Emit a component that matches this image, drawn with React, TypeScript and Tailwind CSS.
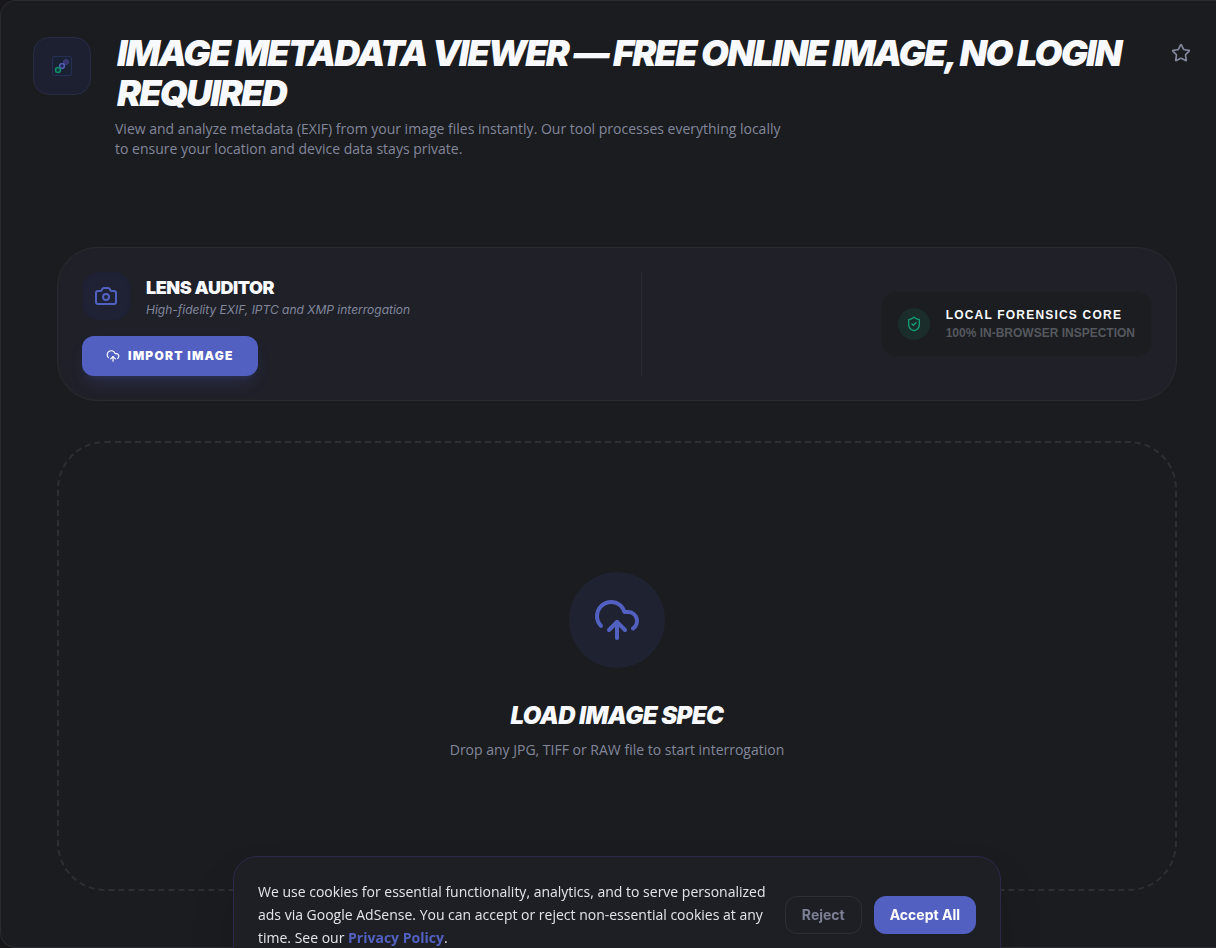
import { Camera, CloudUpload, ShieldCheck, Star } from 'lucide-react'

function ToolLogo() {
    return (
        <svg viewBox="0 0 20 20" className="h-5 w-5" fill="none">
            <rect x="0.5" y="0.5" width="19" height="19" rx="2" fill="#1a2133" stroke="#253056"/>
            <path d="M7 13l6-6" stroke="#3d4696" strokeWidth="2"/>
            <circle cx="14" cy="6" r="2.5" fill="#33326c" stroke="#403e83"/>
            <circle cx="10" cy="10" r="2.4" fill="#20264d" stroke="#5661bc" strokeWidth="1.4"/>
            <circle cx="6" cy="14" r="2.5" fill="#123c3c" stroke="#128c6c" strokeWidth="1.5"/>
        </svg>
    )
}

function Header() {
    return (
        <header className="flex items-start gap-6 pt-8 pr-[17px] pl-8">
            <div className="mt-1 flex h-[58px] w-[58px] shrink-0 items-center justify-center rounded-2xl border border-[#282b45] bg-[#1c2030]">
                <ToolLogo/>
            </div>
            <div className="min-w-0 flex-1">
                <h1 className="pl-0.5 text-4xl leading-10 font-black tracking-tighter text-[#f8f9fc] uppercase italic">
                    Image Metadata Viewer — Free Online Image, No Login Required
                </h1>
                <p className="mt-1.5 max-w-2xl font-['Open_Sans',sans-serif] text-sm leading-5 font-medium text-[#83879c]">
                    View and analyze metadata (EXIF) from your image files instantly. Our tool processes everything locally to ensure your location and device data stays private.
                </p>
            </div>
            <button type="button" aria-label="Add to favorites" className="mt-0.5 shrink-0 p-2 text-[#83879c]">
                <Star className="h-5 w-5"/>
            </button>
        </header>
    )
}

function AuditorCard() {
    return (
        <section className="grid grid-cols-2 gap-12 rounded-[40px] border border-[#2a2b32] bg-[#1f2028] p-6">
            {/* Tool name and import */}
            <div className="flex flex-col items-start gap-4">
                <div className="flex items-center gap-4">
                    <div className="flex h-12 w-12 items-center justify-center rounded-2xl bg-[#1f2235] text-[#5261c1] shadow-inner">
                        <Camera className="h-6 w-6"/>
                    </div>
                    <div className="pt-1">
                        <h2 className="text-lg leading-6 font-black tracking-tight text-[#f8f9fc] uppercase">Lens Auditor</h2>
                        <p className="text-xs leading-5 text-[#83879c] italic">High-fidelity EXIF, IPTC and XMP interrogation</p>
                    </div>
                </div>
                <button type="button" className="flex h-10 items-center gap-2 rounded-xl bg-[#5261c1] px-6 text-xs font-black tracking-widest text-white uppercase shadow-lg shadow-[#5261c1]/20">
                    <CloudUpload className="h-3.5 w-3.5"/>
                    Import Image
                </button>
            </div>

            {/* Privacy badge */}
            <div className="flex items-center justify-end border-l border-[#2b2c33]">
                <div className="flex items-center gap-4 rounded-2xl border border-[#1e2024] bg-[#1c1d20] p-4">
                    <div className="flex h-8 w-8 items-center justify-center rounded-full bg-[#1a2d2b] text-[#12a078]">
                        <ShieldCheck className="h-4 w-4"/>
                    </div>
                    <div className="-my-0.5 font-['Liberation_Sans',sans-serif] uppercase">
                        <p className="text-xs leading-[18px] font-black tracking-widest text-[#f8f9fc]">Local Forensics Core</p>
                        <p className="text-xs leading-[18px] font-bold text-[#55585f]">100% In-Browser Inspection</p>
                    </div>
                </div>
            </div>
        </section>
    )
}

function DropZone() {
    return (
        <section className="flex h-[450px] flex-col items-center justify-center rounded-[48px] border-2 border-dashed border-[#2d2f33]">
            <div className="flex h-24 w-24 items-center justify-center rounded-full bg-[#1f2231] text-[#5261c1]">
                <CloudUpload className="h-12 w-12"/>
            </div>
            <h3 className="mt-8 text-2xl leading-8 font-black tracking-tight text-[#f8f9fc] uppercase italic">Load Image Spec</h3>
            <p className="mt-2 font-['Open_Sans',sans-serif] text-sm leading-5 font-medium text-[#83879c]">Drop any JPG, TIFF or RAW file to start interrogation</p>
        </section>
    )
}

function CookieBanner() {
    return (
        <div className="fixed right-0 -bottom-[27px] left-[18px] flex justify-center">
            <div className="flex w-full max-w-3xl items-center gap-4 rounded-3xl border border-[#29294a] bg-[#1e1f25] px-6 pt-[23px] pb-[25px] shadow-2xl">
                <p className="flex-1 font-['Open_Sans',sans-serif] text-sm leading-[23px] text-[#e4e5ea]">
                    We use cookies for essential functionality, analytics, and to serve personalized ads via Google AdSense. You can accept or reject non-essential cookies at any time. See our <a href="#privacy" className="font-bold text-[#5261c1]">Privacy Policy</a>.
                </p>
                <div className="flex shrink-0 gap-3 text-sm leading-5 font-bold">
                    <button type="button" className="rounded-xl border border-[#2d2f36] px-4 py-2 text-[#7c8095]">Reject</button>
                    <button type="button" className="rounded-xl bg-[#5261c1] px-4 py-2 text-white">Accept All</button>
                </div>
            </div>
        </div>
    )
}

export default function App() {
    return (
        <div className="min-h-screen bg-[#18181b] font-['Inter',sans-serif]">
            <main className="min-h-screen rounded-l-2xl border-y border-l border-[#2a2b30] bg-[#1b1c1f]">
                <Header/>
                <div className="flex flex-col gap-10 pt-[88px] pr-[39px] pb-[55px] pl-14">
                    <AuditorCard/>
                    <DropZone/>
                </div>
            </main>
            <CookieBanner/>
        </div>
    )
}
